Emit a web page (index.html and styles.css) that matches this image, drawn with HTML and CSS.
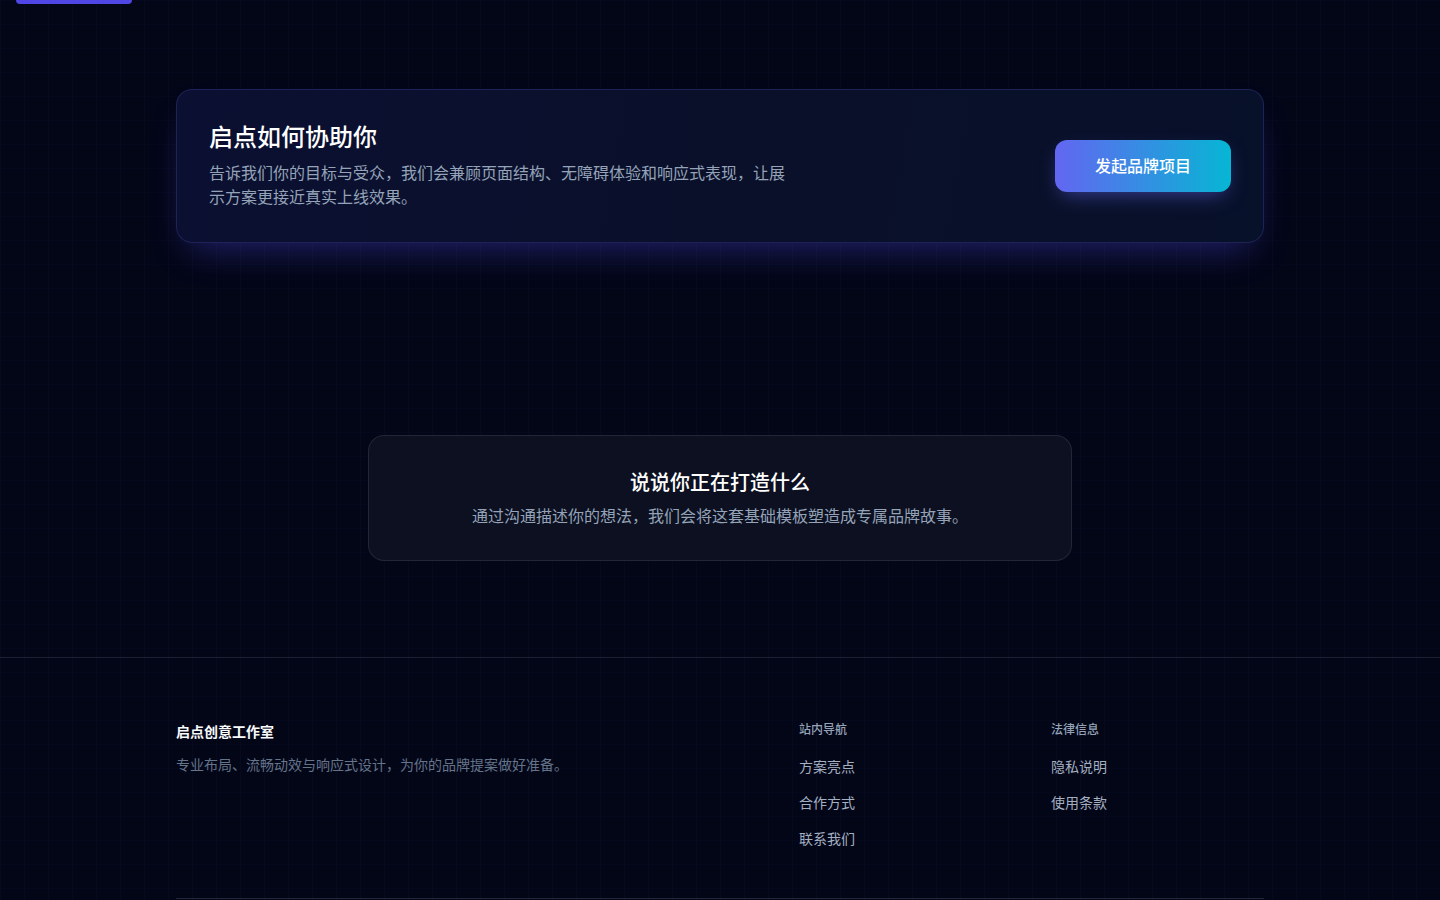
FILE: index.html
```html
<!DOCTYPE html>
<html lang="zh-CN">
<head>
<meta charset="utf-8">
<title>启点创意工作室</title>
<link rel="stylesheet" href="styles.css">
</head>
<body>
<div class="page">
  <div class="top-tab"></div>

  <section class="cta-section">
    <div class="cta-card">
      <div class="cta-text">
        <h2 class="cta-title">启点如何协助你</h2>
        <p class="cta-desc">告诉我们你的目标与受众，我们会兼顾页面结构、无障碍体验和响应式表现，让展示方案更接近真实上线效果。</p>
      </div>
      <a class="cta-button" href="#">发起品牌项目</a>
    </div>
  </section>

  <section class="story-section">
    <div class="story-card">
      <h3 class="story-title">说说你正在打造什么</h3>
      <p class="story-desc">通过沟通描述你的想法，我们会将这套基础模板塑造成专属品牌故事。</p>
    </div>
  </section>

  <footer class="footer">
    <div class="footer-inner">
      <div class="footer-grid">
        <div class="footer-brand">
          <div class="brand-name">启点创意工作室</div>
          <p class="brand-desc">专业布局、流畅动效与响应式设计，为你的品牌提案做好准备。</p>
        </div>
        <div class="footer-col">
          <div class="col-title">站内导航</div>
          <a class="col-link" href="#">方案亮点</a>
          <a class="col-link" href="#">合作方式</a>
          <a class="col-link" href="#">联系我们</a>
        </div>
        <div class="footer-col">
          <div class="col-title">法律信息</div>
          <a class="col-link" href="#">隐私说明</a>
          <a class="col-link" href="#">使用条款</a>
        </div>
      </div>
      <div class="footer-bottom"></div>
    </div>
  </footer>
</div>
</body>
</html>
```

FILE: styles.css
```css
* { box-sizing: border-box; }

html, body {
  margin: 0;
  padding: 0;
}

body {
  background-color: #030617;
  background-image:
    linear-gradient(to right, rgba(99, 102, 241, 0.035) 1px, transparent 1px),
    linear-gradient(to bottom, rgba(99, 102, 241, 0.02) 1px, transparent 1px);
  background-size: 24px 24px;
  background-position: 0 0;
  font-family: "Noto Sans CJK SC", "Noto Sans", sans-serif;
  color: #f8fafc;
}

.page {
  min-height: 100vh;
}

.top-tab {
  width: 116px;
  height: 4px;
  margin-left: 16px;
  background: #4f46e5;
  border-radius: 0 0 8px 8px;
}

.cta-section {
  padding-top: 85px;
  display: flex;
  justify-content: center;
}

.cta-card {
  width: 1088px;
  display: flex;
  align-items: center;
  justify-content: space-between;
  padding: 30px 32px 34px;
  border: 1px solid rgba(99, 102, 241, 0.22);
  border-radius: 16px;
  background: linear-gradient(100deg, #0b1032 0%, #0a1029 55%, #08112a 100%);
  box-shadow: 0 18px 36px -14px rgba(79, 70, 229, 0.45);
}

.cta-title {
  margin: 0;
  font-size: 24px;
  line-height: 32px;
  font-weight: 500;
  color: #ffffff;
}

.cta-desc {
  margin: 8px 0 0;
  max-width: 576px;
  font-size: 16px;
  line-height: 24px;
  color: #94a3b8;
}

.cta-button {
  display: inline-block;
  margin-top: 4px;
  padding: 15px 40px 17px;
  font-size: 16px;
  line-height: 20px;
  font-weight: 500;
  color: #ffffff;
  text-decoration: none;
  border-radius: 12px;
  background: linear-gradient(90deg, #6366f1 0%, #06b6d4 100%);
  box-shadow: 0 8px 20px -6px rgba(99, 102, 241, 0.55);
}

.story-section {
  padding-top: 192px;
  display: flex;
  justify-content: center;
}

.story-card {
  width: 704px;
  padding: 32px 32px 33px;
  text-align: center;
  background: #0c1020;
  border: 1px solid rgba(148, 163, 184, 0.16);
  border-radius: 16px;
}

.story-title {
  margin: 0;
  font-size: 20px;
  line-height: 28px;
  font-weight: 500;
  color: #ffffff;
}

.story-desc {
  margin: 7px 0 0;
  font-size: 16px;
  line-height: 24px;
  color: #94a3b8;
}

.footer {
  margin-top: 96px;
  border-top: 1px solid rgba(148, 163, 184, 0.16);
  padding-top: 63px;
}

.footer-inner {
  width: 1088px;
  margin: 0 auto;
}

.footer-grid {
  display: grid;
  grid-template-columns: 1fr 213px 213px;
  column-gap: 39px;
}

.brand-name {
  font-size: 14px;
  line-height: 20px;
  font-weight: 700;
  color: #f8fafc;
}

.brand-desc {
  margin: 12px 0 0;
  font-size: 14px;
  line-height: 22px;
  color: #64748b;
}

.footer-col {
  display: flex;
  flex-direction: column;
  align-items: flex-start;
}

.col-title {
  font-size: 12px;
  line-height: 16px;
  font-weight: 500;
  color: #94a3b8;
  margin-bottom: 19px;
}

.col-link {
  font-size: 14px;
  line-height: 20px;
  color: #a3b0c2;
  text-decoration: none;
  margin-bottom: 16px;
}

.col-link:last-child {
  margin-bottom: 0;
}

.footer-bottom {
  margin-top: 50px;
  border-top: 1px solid rgba(148, 163, 184, 0.22);
  height: 64px;
}
```
